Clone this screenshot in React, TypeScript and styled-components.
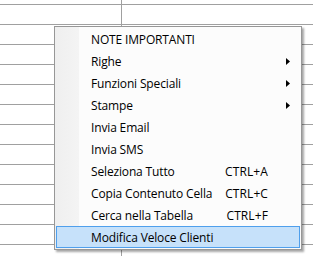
import React from "react";
import styled, { createGlobalStyle } from "styled-components";

const Global = createGlobalStyle`
  html, body { margin: 0; padding: 0; background: #ffffff; }
  body { width: 313px; height: 256px; overflow: hidden; font-family: "Open Sans", "Noto Sans", sans-serif; }
`;

const Page = styled.div`
  position: relative;
  width: 313px;
  height: 256px;
  overflow: hidden;
  background: #ffffff;
`;

const Table = styled.div`
  display: flex;
  flex-direction: column;
`;

const Row = styled.div<{ $h: number }>`
  display: grid;
  grid-template-columns: 122px 1fr;
  height: ${(p) => p.$h}px;
  border-bottom: 1px solid #a0a0a0;
`;

const Cell = styled.div<{ $divider?: boolean }>`
  border-right: ${(p) => (p.$divider ? "1px solid #a0a0a0" : "none")};
`;

const Menu = styled.div`
  position: absolute;
  left: 54px;
  top: 26px;
  width: 244px;
  padding: 1px;
  border: 1px solid #979797;
  background:
    linear-gradient(to right, #efefef 0px, #f4f4f4 24px, #fcfcfc 24px) no-repeat;
  background-color: #fcfcfc;
  box-shadow: 2px 2px 2px rgba(0, 0, 0, 0.35);
  font-family: "Open Sans", "Noto Sans", sans-serif;
  font-size: 12px;
  color: #000;
`;

const Item = styled.div<{ $active?: boolean }>`
  position: relative;
  display: flex;
  align-items: center;
  height: 22px;
  box-sizing: border-box;
  padding: 0 31px 0 34px;
  border: 1px solid ${(p) => (p.$active ? "#4f9fec" : "transparent")};
  background: ${(p) => (p.$active ? "#c6e1fa" : "transparent")};
  white-space: nowrap;
`;

const Label = styled.span`
  flex: 1;
  letter-spacing: -0.15px;
`;

const Shortcut = styled.span`
  text-align: right;
  letter-spacing: 0.1px;
`;

const Arrow = styled.svg`
  position: absolute;
  right: 9px;
  top: 7px;
`;

const items: { label: string; shortcut?: string; sub?: boolean; active?: boolean }[] = [
  { label: "NOTE IMPORTANTI" },
  { label: "Righe", sub: true },
  { label: "Funzioni Speciali", sub: true },
  { label: "Stampe", sub: true },
  { label: "Invia Email" },
  { label: "Invia SMS" },
  { label: "Seleziona Tutto", shortcut: "CTRL+A" },
  { label: "Copia Contenuto Cella", shortcut: "CTRL+C" },
  { label: "Cerca nella Tabella", shortcut: "CTRL+F" },
  { label: "Modifica Veloce Clienti", active: true },
];

export default function App() {
  const rows = [4, ...Array.from({ length: 13 }, () => 19)];
  return (
    <Page>
      <Global />
      <Table>
        {rows.map((h, i) => (
          <Row key={i} $h={h}>
            <Cell $divider />
            <Cell />
          </Row>
        ))}
      </Table>
      <Menu>
        {items.map((it) => (
          <Item key={it.label} $active={it.active}>
            <Label>{it.label}</Label>
            {it.shortcut && <Shortcut>{it.shortcut}</Shortcut>}
            {it.sub && (
              <Arrow width="4" height="7" viewBox="0 0 4 7">
                <path d="M0 0 L4 3.5 L0 7 Z" fill="#000" />
              </Arrow>
            )}
          </Item>
        ))}
      </Menu>
    </Page>
  );
}
